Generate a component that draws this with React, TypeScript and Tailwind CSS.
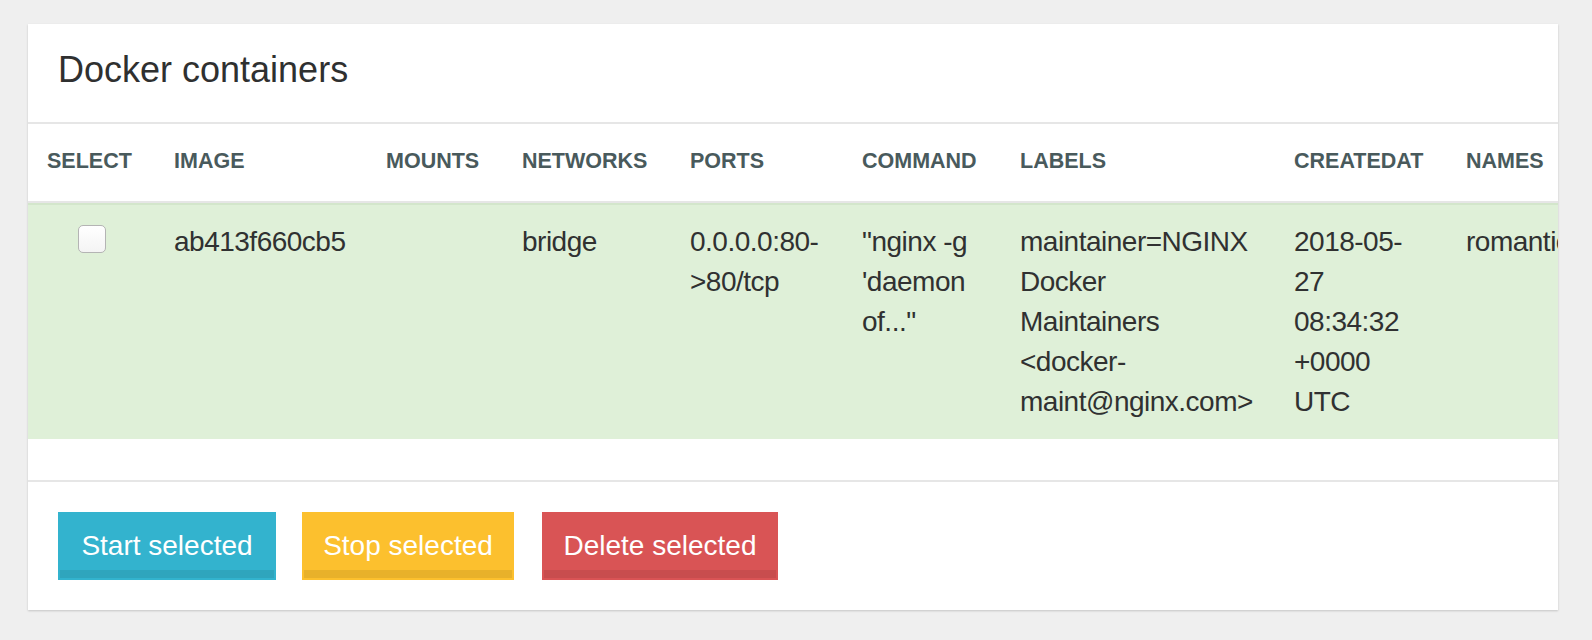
import React from 'react'

const columns = [
  'SELECT',
  'IMAGE',
  'MOUNTS',
  'NETWORKS',
  'PORTS',
  'COMMAND',
  'LABELS',
  'CREATEDAT',
  'NAMES',
]

// each cell holds its lines, wrapped where the original table wrapped them
const row: string[][] = [
  [],
  ['ab413f660cb5'],
  [],
  ['bridge'],
  ['0.0.0.0:80-', '>80/tcp'],
  ['"nginx -g', "'daemon", 'of..."'],
  ['maintainer=NGINX', 'Docker', 'Maintainers', '<docker-', 'maint@nginx.com>'],
  ['2018-05-', '27', '08:34:32', '+0000', 'UTC'],
  ['romantic_hodgkin'],
]

const gridCols =
  'grid grid-cols-[127px_212px_136px_168px_172px_158px_274px_172px_220px] pl-[19px]'

const ActionButton: React.FC<{ label: string; className: string }> = ({
  label,
  className,
}) => (
  <button
    className={`${className} border-2 h-[68px] pt-[12px] pb-[12px] text-center text-[28px] leading-[40px] text-white whitespace-nowrap shadow-[inset_0_-8px_0_rgba(0,0,0,0.08)]`}
  >
    {label}
  </button>
)

const App: React.FC = () => {
  return (
    <div className="min-h-screen bg-[#efefef] pt-[24px] pl-[28px] font-['Liberation_Sans',Arial,sans-serif]">
      <div className="w-[1530px] bg-white overflow-hidden shadow-[0_1px_2px_rgba(0,0,0,0.18)]">
        <div className="pl-[30px] pt-[28px] pb-[34px] border-b-2 border-[#e6e6e6]">
          <h1 className="text-[36px] leading-[36px] text-[#2f3030]">
            Docker containers
          </h1>
        </div>

        <div className="h-[79px] pb-[3px] flex items-center border-b-2 border-[#e6e6e6]">
          <div className={gridCols}>
            {columns.map((c) => (
              <div
                key={c}
                className="text-[21.5px] leading-[30px] font-bold text-[#495a5c] whitespace-nowrap"
              >
                {c}
              </div>
            ))}
          </div>
        </div>

        <div className="bg-[#dff0d8] border-t-2 border-[#d3e6cb] pt-[17px] pb-[17px]">
          <div className={gridCols}>
            <div className="pt-[3px] pl-[31px]">
              <div className="w-[28px] h-[28px] rounded-[5px] border border-[#b4b4b4] bg-gradient-to-b from-white to-[#f4f4f4]" />
            </div>
            {row.slice(1).map((lines, i) => (
              <div
                key={i}
                className="text-[28px] leading-[40px] tracking-[-0.5px] text-[#303131] whitespace-nowrap"
              >
                {lines.map((l) => (
                  <div key={l}>{l}</div>
                ))}
              </div>
            ))}
          </div>
        </div>

        <div className="h-[43px] border-b-2 border-[#e6e6e6]" />

        <div className="flex pl-[30px] pt-[30px] pb-[30px]">
          <ActionButton
            label="Start selected"
            className="w-[218px] bg-[#33b3ce] border-[#33b3ce]"
          />
          <ActionButton
            label="Stop selected"
            className="ml-[26px] w-[212px] bg-[#fcc02e] border-[#fcc02e]"
          />
          <ActionButton
            label="Delete selected"
            className="ml-[28px] w-[236px] bg-[#d95455] border-[#d95455]"
          />
        </div>
      </div>
    </div>
  )
}

export default App
